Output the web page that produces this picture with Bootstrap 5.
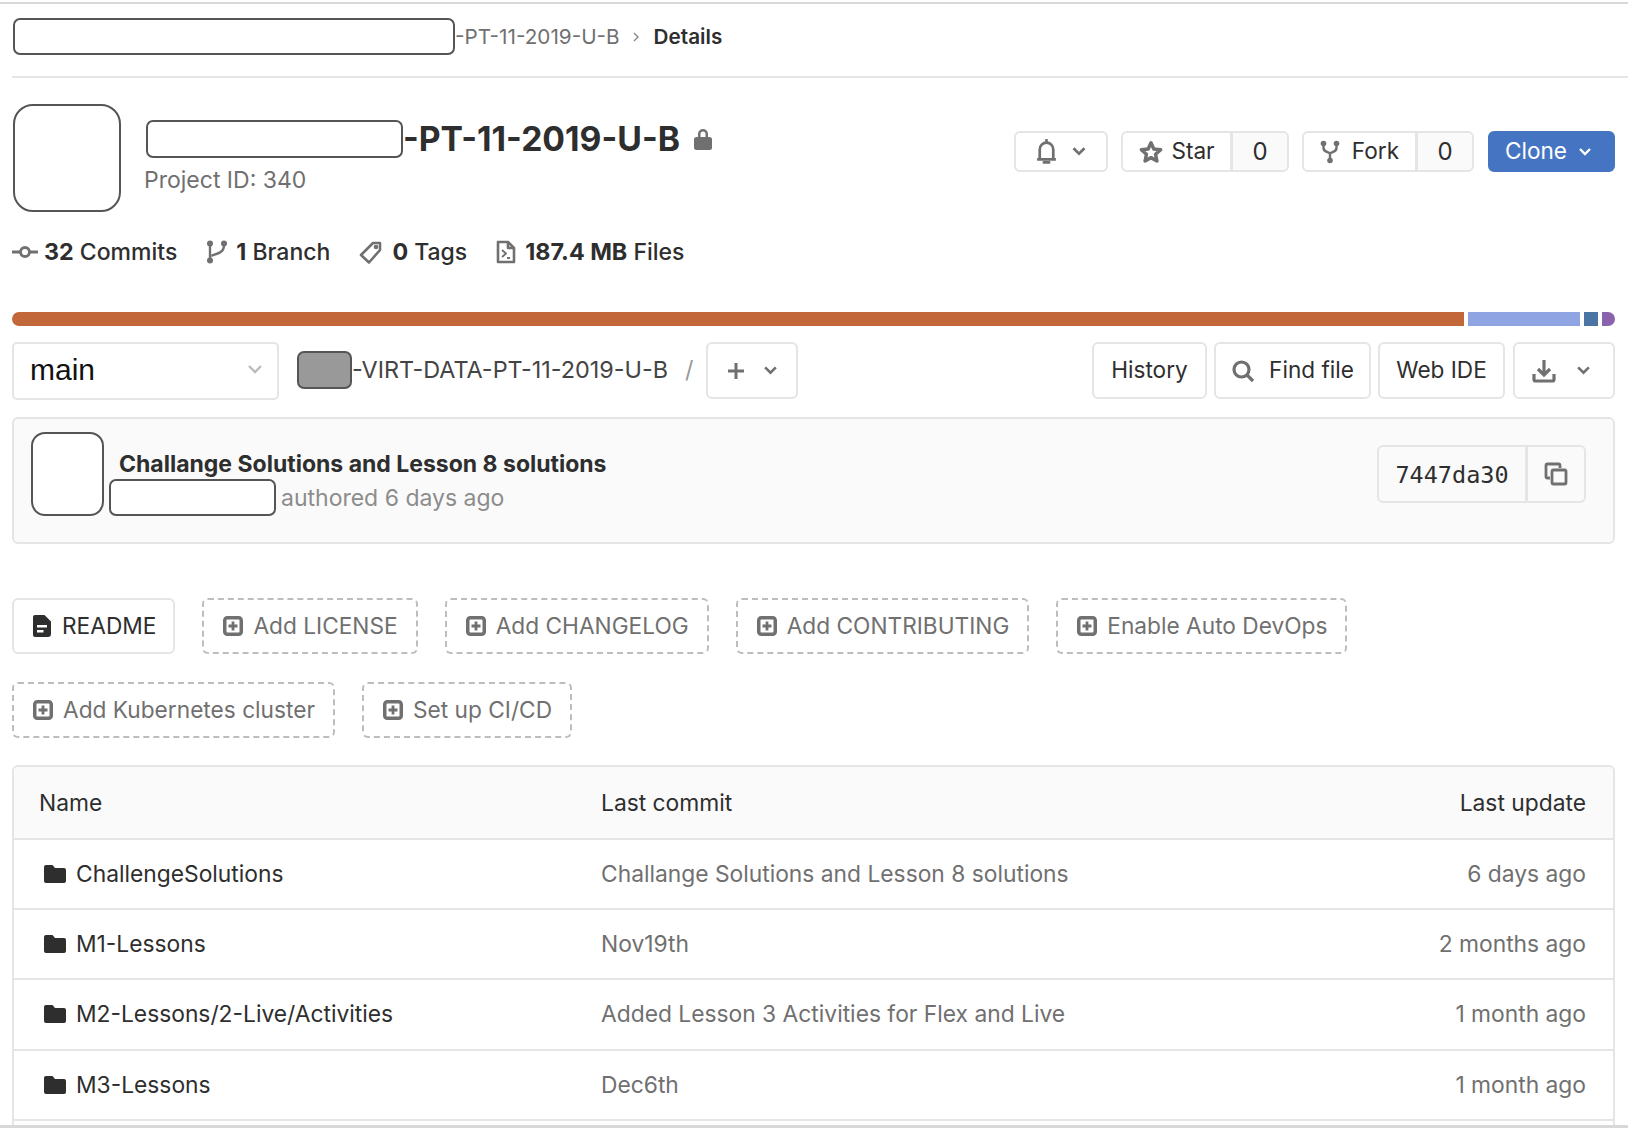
<!DOCTYPE html>
<html lang="en">
<head>
<meta charset="utf-8">
<title>Project details</title>
<link rel="stylesheet" href="https://cdn.jsdelivr.net/npm/bootstrap@5.3.0/dist/css/bootstrap.min.css">
<style>
:root{--ink:#2e2e2e;--mut:#707070;--line:#e5e5e5}
html,body{height:100%;margin:0}
body{font-family:Inter,"Liberation Sans",sans-serif;color:var(--ink);background:#fff;font-size:23px}
.shell{height:1128px;overflow:hidden;display:flex;flex-direction:column;padding-top:2px}
.topline,.botline{height:2px;background:#d8d8d8;flex:none}
.botline{height:3px}
.crumbs{height:74px;margin-left:12px;border-bottom:2px solid var(--line);display:flex;align-items:center;font-size:20.7px;color:var(--mut);padding-left:1px;padding-bottom:7px;flex:none}
.mask{border:2px solid #555;border-radius:7px;background:#fff;flex:none;display:block}
.m-crumb{width:442px;height:37px}
.m-ava{width:108px;height:108px;border-radius:20px}
.m-title{width:257px;height:38px}
.m-commit{width:73px;height:84px;border-radius:14px}
.m-auth{width:167px;height:37px}
.m-group{width:55px;height:38px;background:#999}
.crumb-sep{width:12px;height:12px;margin:0 12px 0 10px;color:#888}
.crumb-cur{font-weight:600;color:var(--ink);margin-left:0}
.pagebody{padding:0 13px 0 12px;flex:1;min-height:0;display:flex;flex-direction:column}
.headrow{height:108px;margin-top:26px;padding-left:1px;display:flex;align-items:flex-start;flex:none}
.tit-wrap{margin-left:25px;padding-top:16px}
.tit{font-size:33.7px;font-weight:700;line-height:38px;margin:0;display:flex;align-items:center}
.tit svg{margin-left:13px;color:var(--mut)}
.pid{font-size:23px;color:var(--mut);margin-top:7px;margin-left:-2px;line-height:30px}
.acts{margin-left:auto;margin-top:27px;display:flex;gap:13px}
.gbtn{--bs-btn-font-size:22.6px;--bs-btn-color:var(--ink);--bs-btn-border-color:var(--line);--bs-btn-hover-border-color:var(--line);--bs-btn-hover-color:var(--ink);--bs-btn-bg:#fff;--bs-btn-hover-bg:#fafafa;--bs-btn-border-width:2px;--bs-btn-border-radius:6px;--bs-btn-padding-y:0;--bs-btn-padding-x:0;--bs-btn-line-height:1;display:inline-flex;align-items:center;justify-content:center;gap:10px}
.acts .gbtn{height:41px}
.ic{flex:none;display:block;color:var(--mut)}
.cnt{background:#fafafa!important;width:58px;font-size:24px}
.b-bell{width:94px;gap:13px}
.b-star{width:111px;gap:7px}.b-fork{width:115px;gap:12px}
.b-clone{width:127px;gap:11px;padding-right:6px;margin-left:1px;--bs-btn-bg:#4575c2;--bs-btn-color:#fff;--bs-btn-border-color:#4575c2;--bs-btn-hover-bg:#4575c2;--bs-btn-hover-color:#fff;--bs-btn-hover-border-color:#4575c2}
.b-clone .ic{color:#fff}
.stats{margin-top:22px;height:36px;display:flex;align-items:center;font-size:23px;flex:none}
.stat{display:flex;align-items:center;gap:6px;margin-right:29px;font-weight:500;white-space:nowrap}
.stat.mid{gap:8px}
.stat.wide{gap:9px}
.stat b{font-weight:700;font-size:23.3px}
.langbar{margin-top:42px;height:14px;display:flex;gap:4px;flex:none;border-radius:7px;overflow:hidden}
.langbar span{display:block;height:100%}
.navrow{margin-top:16px;height:58px;display:flex;align-items:flex-start;flex:none;gap:7px}
.navrow .gbtn{height:57px;gap:14px}
.navrow .b-add{gap:18px}
.navrow .b-dl{gap:20px;padding-right:6px}
.branchsel{width:267px;height:58px;border:2px solid var(--line);border-radius:5px;display:flex;align-items:center;justify-content:space-between;padding:0 14px 3px 16px;font-family:"Liberation Sans",Arial,sans-serif;font-size:30px;color:#111;margin-right:11px}
.pathp{display:flex;align-items:center;height:56px;font-size:23.4px;color:#444}
.slash{color:#999;margin:0 6px 0 17px}
.b-add{width:92px}.b-hist{width:115px;margin-left:auto}.b-find{width:157px}.b-ide{width:127px}.b-dl{width:102px;margin-left:1px}
.commitbox{margin-top:17px;height:127px;background:#fafafa;border:2px solid var(--line);border-radius:6px;display:flex;align-items:flex-start;padding:13px 27px 0 17px;flex:none}
.commitmeta{margin-left:5px;padding-top:17px}
.cm-t{font-weight:700;font-size:23px;line-height:30px;margin-left:10px}
.cm-s{display:flex;align-items:center;color:#8c8c8c;font-size:23px}
.cm-s span{margin-left:5px;margin-top:2px}
.hashgrp{margin-left:auto;margin-top:13px}
.hashgrp .gbtn{height:58px}
.hash{font-family:"DejaVu Sans Mono",monospace;width:150px;background:#fafafa!important;font-size:23.500px;padding-top:3px}
.copyb{width:60px;background:#fafafa!important}
.quick{margin-top:54px;display:flex;flex-wrap:wrap;gap:28px 27px;flex:none}
.qb{height:56px;display:inline-flex;align-items:center;gap:10px;border:2px dashed #bdbdbd;border-radius:6px;padding:0 18px 0 19px;color:var(--mut);font-size:22.7px;text-decoration:none;white-space:nowrap}
.qb.solid{border:2px solid var(--line);color:var(--ink);padding:0 17px 0 18px}
.qb.solid .ic{color:var(--ink)}
.treewrap{margin-top:27px;flex:1;min-height:0;overflow:hidden;border:2px solid var(--line);border-bottom:0;border-radius:6px 6px 0 0}
.tree{table-layout:fixed;margin:0;--bs-table-bg:transparent;--bs-table-color:var(--mut);border-color:var(--line)}
.tree th,.tree td{font-size:22.800px;font-weight:400;border-bottom:2px solid var(--line);vertical-align:middle;padding:0}
.tree thead th{height:72px;background:#fafafa;color:var(--ink);padding-top:2px}
.tree tbody td{height:70.200px}
.tree .c1{padding-left:25px;width:587px}
.tree .c3{padding-right:27px;text-align:right;width:360px}
.fname{display:flex;align-items:center;gap:10px;color:var(--ink);padding-left:5px;white-space:nowrap}
.tree tbody .c1 .ic{color:var(--ink)}
</style>
</head>
<body>
<div class="shell">
  <div class="topline"></div>
  <nav class="crumbs">
    <span class="mask m-crumb"></span><span>-PT-11-2019-U-B</span>
    <svg class="crumb-sep" viewBox="0 0 12 12" fill="none" stroke="currentColor" stroke-width="1.4"><path d="M4 2l4 4-4 4"/></svg>
    <span class="crumb-cur">Details</span>
  </nav>
  <main class="pagebody">
    <section class="headrow">
      <span class="mask m-ava"></span>
      <div class="tit-wrap">
        <h1 class="tit"><span class="mask m-title"></span>-PT-11-2019-U-B
          <svg class="ic" width="20" height="24" viewBox="0 0 20 24" fill="currentColor"><path d="M5 10V7a5 5 0 0 1 10 0v3h1.500A2.500 2.500 0 0 1 19 12.500v8a2.500 2.500 0 0 1-2.500 2.500h-13A2.500 2.500 0 0 1 1 20.500v-8A2.500 2.500 0 0 1 3.500 10zm2.500 0h5V7a2.500 2.500 0 0 0-5 0z"/></svg>
        </h1>
        <div class="pid">Project ID: 340</div>
      </div>
      <div class="acts">
        <button class="btn gbtn b-bell" type="button" aria-label="Notifications">
          <svg class="ic" width="23" height="25" viewBox="0 0 22 24" fill="none" stroke="currentColor" stroke-width="2.600"><path d="M2 19.500h18M4.500 19.500V10a6.500 6.500 0 0 1 13 0v9.500"/><path d="M8.500 22.500h5" stroke-linecap="round"/><path d="M11 1v2" stroke-linecap="round"/></svg>
          <svg class="ic" width="16" height="11" viewBox="0 0 14 10" fill="none" stroke="currentColor" stroke-width="2.400"><path d="M2 2l5 5 5-5"/></svg>
        </button>
        <div class="btn-group">
          <button class="btn gbtn b-star" type="button">
            <svg class="ic" width="26" height="26" viewBox="0 0 24 24" fill="none" stroke="currentColor" stroke-width="3.200" stroke-linejoin="round"><path d="M12 3.500l2.600 5.800 6.300.6-4.700 4.200 1.300 6.200L12 17.200l-5.500 3.100 1.300-6.200-4.700-4.200 6.300-.6z"/></svg>Star</button>
          <button class="btn gbtn cnt" type="button">0</button>
        </div>
        <div class="btn-group">
          <button class="btn gbtn b-fork" type="button">
            <svg class="ic" width="20" height="24" viewBox="0 0 20 24" fill="currentColor"><circle cx="3.500" cy="3.500" r="2.800"/><circle cx="16.500" cy="3.500" r="2.800"/><circle cx="10" cy="20.500" r="2.800"/><path d="M2.300 5h2.400v2.500c0 1.500 1 2.300 2.300 3l3 1.500 3-1.500c1.300-.7 2.300-1.500 2.300-3V5h2.400v3c0 2.400-1.500 3.900-3.400 4.800L11.200 14v6H8.800v-6l-3.100-1.200C3.800 11.900 2.300 10.400 2.300 8z"/></svg>Fork</button>
          <button class="btn gbtn cnt" type="button">0</button>
        </div>
        <button class="btn gbtn b-clone" type="button">Clone
          <svg class="ic" width="14" height="10" viewBox="0 0 14 10" fill="none" stroke="currentColor" stroke-width="2.400"><path d="M2 2l5 5 5-5"/></svg>
        </button>
      </div>
    </section>

    <section class="stats">
      <span class="stat"><svg class="ic" width="26" height="16" viewBox="0 0 26 16" fill="none" stroke="currentColor" stroke-width="2.800"><circle cx="13" cy="8" r="4.500"/><path d="M0 8h8M18 8h8"/></svg><span><b>32</b> Commits</span></span>
      <span class="stat mid"><svg class="ic" width="22" height="24" viewBox="0 0 22 24" fill="currentColor"><circle cx="4" cy="3.500" r="3"/><circle cx="4" cy="20.500" r="3"/><circle cx="18" cy="3.500" r="3"/><path d="M2.800 4h2.400v16H2.800z"/><path d="M16.800 5h2.400c0 6-3.500 8.500-8 10l-6 2v-2.500l5.500-2c3.700-1.300 6.100-3 6.100-7.500z"/></svg><span><b>1</b> Branch</span></span>
      <span class="stat wide"><svg class="ic" width="24" height="24" viewBox="0 0 24 24" fill="none" stroke="currentColor" stroke-width="2.600" stroke-linejoin="round"><path d="M14 3h7v7L10 22.500 2 15z"/><circle cx="17" cy="7" r="1" fill="currentColor"/></svg><span><b>0</b> Tags</span></span>
      <span class="stat wide"><svg class="ic" width="20" height="24" viewBox="0 0 20 24" fill="none" stroke="currentColor" stroke-width="2.600" stroke-linejoin="round"><path d="M2 2h10l6 6v14H2z"/><path d="M12 2v6h6"/><path d="M6 10l4 3.500L6 17M11 18h3" stroke-width="1.800"/></svg><span><b>187.4 MB</b> Files</span></span>
    </section>

    <div class="langbar">
      <span style="width:1453px;background:#c1673a"></span>
      <span style="width:112px;background:#8fa4e3"></span>
      <span style="width:14px;background:#4a74a3"></span>
      <span style="width:13px;background:#8b62ad"></span>
    </div>

    <section class="navrow">
      <div class="branchsel">main
        <svg class="ic" width="16" height="11" viewBox="0 0 16 11" fill="none" stroke="#bbb" stroke-width="2.400"><path d="M2 2l6 6 6-6"/></svg>
      </div>
      <div class="pathp"><span class="mask m-group"></span>-VIRT-DATA-PT-11-2019-U-B<span class="slash">/</span></div>
      <button class="btn gbtn b-add" type="button" aria-label="Add">
        <svg class="ic" width="18" height="18" viewBox="0 0 18 18" fill="none" stroke="currentColor" stroke-width="3"><path d="M9 1v16M1 9h16"/></svg>
        <svg class="ic" width="15" height="11" viewBox="0 0 14 10" fill="none" stroke="currentColor" stroke-width="2.400"><path d="M2 2l5 5 5-5"/></svg>
      </button>
      <button class="btn gbtn b-hist" type="button">History</button>
      <button class="btn gbtn b-find" type="button">
        <svg class="ic" width="24" height="24" viewBox="0 0 24 24" fill="none" stroke="currentColor" stroke-width="3.200"><circle cx="10.500" cy="10.500" r="7.500"/><path d="M16 16l6 6"/></svg>Find file</button>
      <button class="btn gbtn b-ide" type="button">Web IDE</button>
      <button class="btn gbtn b-dl" type="button" aria-label="Download">
        <svg class="ic" width="24" height="24" viewBox="0 0 24 24" fill="none" stroke="currentColor" stroke-width="3.200"><path d="M12 1v14M6 10l6 6 6-6"/><path d="M2 15v5.500a1.500 1.500 0 0 0 1.500 1.500h17a1.500 1.500 0 0 0 1.500-1.500V15"/></svg>
        <svg class="ic" width="15" height="11" viewBox="0 0 14 10" fill="none" stroke="currentColor" stroke-width="2.400"><path d="M2 2l5 5 5-5"/></svg>
      </button>
    </section>

    <section class="commitbox">
      <span class="mask m-commit"></span>
      <div class="commitmeta">
        <div class="cm-t">Challange Solutions and Lesson 8 solutions</div>
        <div class="cm-s"><i class="mask m-auth"></i><span>authored 6 days ago</span></div>
      </div>
      <div class="btn-group hashgrp">
        <button class="btn gbtn hash" type="button">7447da30</button>
        <button class="btn gbtn copyb" type="button" aria-label="Copy">
          <svg class="ic" width="24" height="24" viewBox="0 0 24 24" fill="none" stroke="currentColor" stroke-width="2.800"><path d="M16 6V3.500A1.500 1.500 0 0 0 14.500 2h-11A1.500 1.500 0 0 0 2 3.500v11A1.500 1.500 0 0 0 3.500 16H6"/><rect x="8" y="8" width="14" height="14" rx="1.500"/></svg>
        </button>
      </div>
    </section>

    <section class="quick">
      <a class="qb solid" href="#"><svg class="ic" width="20" height="24" viewBox="0 0 20 24" fill="currentColor"><path fill-rule="evenodd" d="M3 1h9.500L19 7.500V20a3 3 0 0 1-3 3H3a2 2 0 0 1-2-2V3a2 2 0 0 1 2-2zm2 10v2.500h10V11zm0 5v2.500h6.500V16z"/></svg>README</a>
      <a class="qb" href="#"><svg class="ic" width="20" height="20" viewBox="0 0 20 20" fill="none" stroke="currentColor"><rect x="1.750" y="1.750" width="16.500" height="16.500" rx="2.500" stroke-width="3.500"/><path d="M10 5.500v9M5.500 10h9" stroke-width="2.800"/></svg>Add LICENSE</a>
      <a class="qb" href="#"><svg class="ic" width="20" height="20" viewBox="0 0 20 20" fill="none" stroke="currentColor"><rect x="1.750" y="1.750" width="16.500" height="16.500" rx="2.500" stroke-width="3.500"/><path d="M10 5.500v9M5.500 10h9" stroke-width="2.800"/></svg>Add CHANGELOG</a>
      <a class="qb" href="#"><svg class="ic" width="20" height="20" viewBox="0 0 20 20" fill="none" stroke="currentColor"><rect x="1.750" y="1.750" width="16.500" height="16.500" rx="2.500" stroke-width="3.500"/><path d="M10 5.500v9M5.500 10h9" stroke-width="2.800"/></svg>Add CONTRIBUTING</a>
      <a class="qb" href="#"><svg class="ic" width="20" height="20" viewBox="0 0 20 20" fill="none" stroke="currentColor"><rect x="1.750" y="1.750" width="16.500" height="16.500" rx="2.500" stroke-width="3.500"/><path d="M10 5.500v9M5.500 10h9" stroke-width="2.800"/></svg>Enable Auto DevOps</a>
      <a class="qb" href="#"><svg class="ic" width="20" height="20" viewBox="0 0 20 20" fill="none" stroke="currentColor"><rect x="1.750" y="1.750" width="16.500" height="16.500" rx="2.500" stroke-width="3.500"/><path d="M10 5.500v9M5.500 10h9" stroke-width="2.800"/></svg>Add Kubernetes cluster</a>
      <a class="qb" href="#"><svg class="ic" width="20" height="20" viewBox="0 0 20 20" fill="none" stroke="currentColor"><rect x="1.750" y="1.750" width="16.500" height="16.500" rx="2.500" stroke-width="3.500"/><path d="M10 5.500v9M5.500 10h9" stroke-width="2.800"/></svg>Set up CI/CD</a>
    </section>

    <div class="treewrap">
      <table class="table tree">
        <thead><tr><th class="c1">Name</th><th>Last commit</th><th class="c3">Last update</th></tr></thead>
        <tbody>
          <tr><td class="c1"><span class="fname"><svg class="ic" width="22" height="20" viewBox="0 0 22 20" fill="currentColor"><path d="M2 1h6.500l2.500 3h9a2 2 0 0 1 2 2v11a2 2 0 0 1-2 2H2a2 2 0 0 1-2-2V3a2 2 0 0 1 2-2z"/></svg>ChallengeSolutions</span></td><td>Challange Solutions and Lesson 8 solutions</td><td class="c3">6 days ago</td></tr>
          <tr><td class="c1"><span class="fname"><svg class="ic" width="22" height="20" viewBox="0 0 22 20" fill="currentColor"><path d="M2 1h6.500l2.500 3h9a2 2 0 0 1 2 2v11a2 2 0 0 1-2 2H2a2 2 0 0 1-2-2V3a2 2 0 0 1 2-2z"/></svg>M1-Lessons</span></td><td>Nov19th</td><td class="c3">2 months ago</td></tr>
          <tr><td class="c1"><span class="fname"><svg class="ic" width="22" height="20" viewBox="0 0 22 20" fill="currentColor"><path d="M2 1h6.500l2.500 3h9a2 2 0 0 1 2 2v11a2 2 0 0 1-2 2H2a2 2 0 0 1-2-2V3a2 2 0 0 1 2-2z"/></svg>M2-Lessons/2-Live/Activities</span></td><td>Added Lesson 3 Activities for Flex and Live</td><td class="c3">1 month ago</td></tr>
          <tr><td class="c1"><span class="fname"><svg class="ic" width="22" height="20" viewBox="0 0 22 20" fill="currentColor"><path d="M2 1h6.500l2.500 3h9a2 2 0 0 1 2 2v11a2 2 0 0 1-2 2H2a2 2 0 0 1-2-2V3a2 2 0 0 1 2-2z"/></svg>M3-Lessons</span></td><td>Dec6th</td><td class="c3">1 month ago</td></tr>
        </tbody>
      </table>
    </div>
  </main>
  <div class="botline"></div>
</div>
<script src="https://cdn.jsdelivr.net/npm/bootstrap@5.3.0/dist/js/bootstrap.bundle.min.js"></script>
</body>
</html>
